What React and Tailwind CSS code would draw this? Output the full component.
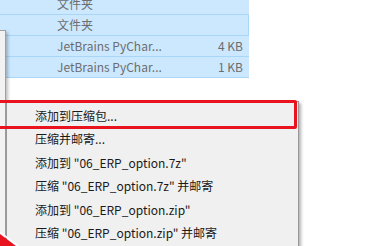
import React from 'react';

const rows = [
    { type: '文件夹', size: '' },
    { type: '文件夹', size: '', focused: true },
    { type: 'JetBrains PyChar...', size: '4 KB' },
    { type: 'JetBrains PyChar...', size: '1 KB' },
];

const items = [
    '添加到压缩包...',
    '压缩并邮寄...',
    '添加到 "06_ERP_option.7z"',
    '压缩 "06_ERP_option.7z" 并邮寄',
    '添加到 "06_ERP_option.zip"',
    '压缩 "06_ERP_option.zip" 并邮寄',
];

export default function App() {
    return (
        <div
            className="relative w-[369px] h-[246px] overflow-hidden bg-white text-[12px]"
            style={{ fontFamily: '"Microsoft YaHei", "Noto Sans CJK SC", "Noto Sans", sans-serif' }}
        >
            {/* File list (selected rows) */}
            <div className="w-[249px] mt-[-6px] flex flex-col">
                {rows.map((r, i) => (
                    <div
                        key={i}
                        className={`h-[21px] flex items-center bg-[#cce8ff] text-[#6d6d6d] border-b border-[#a9d6f7] ${r.focused ? 'border-r border-[#99c9ee]' : ''}`}
                    >
                        <span className="pl-[57px] flex-1 leading-none">{r.type}</span>
                        <span className="pr-[6px] leading-none">{r.size}</span>
                    </div>
                ))}
            </div>

            {/* Parent context menu edge */}
            <div className="absolute left-[-200px] top-[30px] w-[206px] h-[240px] bg-[#f2f2f2] border border-[#a0a0a0] shadow-[2px_2px_3px_rgba(0,0,0,0.25)]"></div>

            {/* Submenu */}
            <div className="absolute left-[6px] top-[101px] w-[293px] h-[160px] bg-[#f0f0f0] border border-[#979797] shadow-[2px_2px_3px_rgba(0,0,0,0.3)] pt-[2px] flex flex-col">
                {items.map((t, i) => (
                    <div key={i} className="h-[23.5px] flex items-center pl-[28px] text-[#1a1a1a] whitespace-pre">
                        {t}
                    </div>
                ))}
            </div>

            {/* Red highlight box */}
            <div className="absolute left-[-3px] top-[100px] w-[300px] h-[29px] border-[3px] border-[#e8131f] rounded-[2px]"></div>

            {/* Red arrow tip */}
            <svg className="absolute left-0 top-[228px]" width="20" height="18" viewBox="0 0 20 18">
                <polygon points="0,6 16,18 0,18" fill="#e8131f" />
                <line x1="0" y1="4" x2="18" y2="18" stroke="#ffffff" strokeWidth="1.5" />
            </svg>
        </div>
    );
}
